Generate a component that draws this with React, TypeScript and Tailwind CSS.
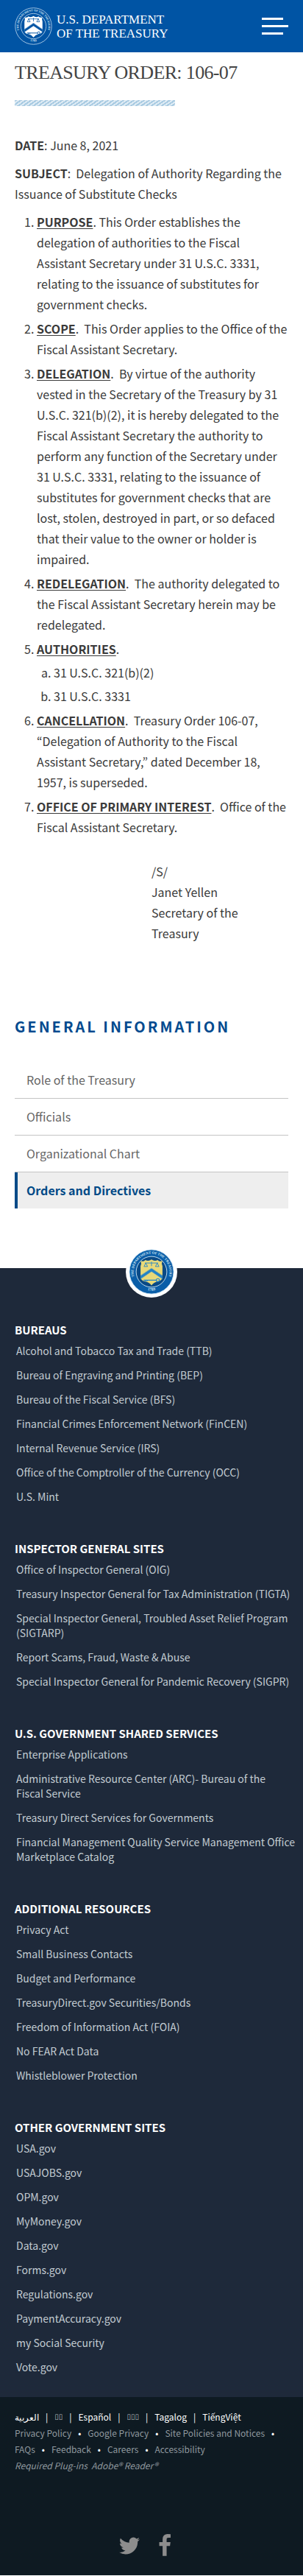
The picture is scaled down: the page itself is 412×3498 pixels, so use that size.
import React from "react";

const navItems = ["Role of the Treasury", "Officials", "Organizational Chart"];

const footerSections: { title: string; links: string[] }[] = [
  {
    title: "BUREAUS",
    links: [
      "Alcohol and Tobacco Tax and Trade (TTB)",
      "Bureau of Engraving and Printing (BEP)",
      "Bureau of the Fiscal Service (BFS)",
      "Financial Crimes Enforcement Network (FinCEN)",
      "Internal Revenue Service (IRS)",
      "Office of the Comptroller of the Currency (OCC)",
      "U.S. Mint",
    ],
  },
  {
    title: "INSPECTOR GENERAL SITES",
    links: [
      "Office of Inspector General (OIG)",
      "Treasury Inspector General for Tax Administration (TIGTA)",
      "Special Inspector General, Troubled Asset Relief Program (SIGTARP)",
      "Report Scams, Fraud, Waste & Abuse",
      "Special Inspector General for Pandemic Recovery (SIGPR)",
    ],
  },
  {
    title: "U.S. GOVERNMENT SHARED SERVICES",
    links: [
      "Enterprise Applications",
      "Administrative Resource Center (ARC)- Bureau of the Fiscal\u00a0Service",
      "Treasury Direct Services for Governments",
      "Financial Management Quality Service Management Office Marketplace Catalog",
    ],
  },
  {
    title: "ADDITIONAL RESOURCES",
    links: [
      "Privacy Act",
      "Small Business Contacts",
      "Budget and Performance",
      "TreasuryDirect.gov Securities/Bonds",
      "Freedom of Information Act (FOIA)",
      "No FEAR Act Data",
      "Whistleblower Protection",
    ],
  },
  {
    title: "OTHER GOVERNMENT SITES",
    links: [
      "USA.gov",
      "USAJOBS.gov",
      "OPM.gov",
      "MyMoney.gov",
      "Data.gov",
      "Forms.gov",
      "Regulations.gov",
      "PaymentAccuracy.gov",
      "my Social Security",
      "Vote.gov",
    ],
  },
];

const languages = [
  { text: "العربية", label: "Arabic", className: "" },
  { text: "▯▯", label: "Chinese", className: "font-['DejaVu_Sans',sans-serif] text-[10px] text-[#b5bbbf]" },
  { text: "Español", label: "Spanish", className: "" },
  { text: "▯▯▯", label: "Korean", className: "font-['DejaVu_Sans',sans-serif] text-[10px] text-[#b5bbbf]" },
  { text: "Tagalog", label: "Tagalog", className: "" },
  { text: "TiếngViệt", label: "Vietnamese", className: "" },
];

const policies = [
  "Privacy Policy",
  "Google Privacy",
  "Site Policies and Notices",
  "FAQs",
  "Feedback",
  "Careers",
  "Accessibility",
];

function Seal({
  id,
  ring,
  line,
  field,
  shield,
  mark,
  className,
}: {
  id: string;
  ring: string;
  line: string;
  field: string;
  shield: string;
  mark: string;
  className: string;
}) {
  return (
    <svg viewBox="0 0 104 104" className={className} aria-hidden="true">
      <defs>
        <path id={id + "-top"} d="M22 80 A41 41 0 1 1 82 80" />
        <path id={id + "-bottom"} d="M34 91 A43 43 0 0 0 70 91" />
      </defs>
      <circle cx="52" cy="52" r="50.5" fill={ring} stroke={line} strokeWidth="1.5" />
      <circle cx="52" cy="52" r="35" fill={field} stroke={line} strokeWidth="1.5" />
      <text fill={line} fontSize="8" fontWeight="700" fontFamily="Liberation Serif, serif">
        <textPath href={"#" + id + "-top"} startOffset="50%" textAnchor="middle">
          THE DEPARTMENT OF THE TREASURY
        </textPath>
      </text>
      <text fill={line} fontSize="9" fontWeight="700" fontFamily="Liberation Serif, serif">
        <textPath href={"#" + id + "-bottom"} startOffset="50%" textAnchor="middle">
          1789
        </textPath>
      </text>
      <path
        d="M27 27 q6 3 11 -2 q7 4 14 -1 q7 5 14 1 q5 5 11 2 q-3 6 0 12 v24 q0 9 -10 11 q-10 2 -15 9 q-5 -7 -15 -9 q-10 -2 -10 -11 v-24 q3 -6 0 -12z"
        fill={shield}
      />
      <path d="M27 60 L52 43 L77 60 V69 L52 52 L27 69z" fill={mark} />
      <path d="M28 60 L52 43.5 L76 60 M28 68 L52 52 L76 68" fill="none" stroke={shield} strokeWidth="1" />
      <path d="M37 32 H67 M52 29 V39 M39 32 l-4 8 h8z M65 32 l-4 8 h8z" fill="none" stroke={mark} strokeWidth="1.5" />
      <path d="M34 71 H63 M63 71 a3.5 3.5 0 1 0 7 0 a3.5 3.5 0 1 0 -7 0 M38 71 v4 M42 71 v3" fill="none" stroke={mark} strokeWidth="2" />
    </svg>
  );
}

function Term({ children }: { children: React.ReactNode }) {
  return <strong className="font-bold underline underline-offset-2">{children}</strong>;
}

export default function App() {
  return (
    <div className="bg-white font-['Noto_Sans_CJK_JP','Noto_Sans',sans-serif] text-[#3a3a3a]">
      <header className="flex h-[71px] items-center justify-between bg-[#0054a4] px-5">
        <a href="#home" className="flex items-center gap-[6px] text-white">
          <Seal id="head" ring="#0054a4" line="#d5e6f5" field="#0054a4" shield="#ffffff" mark="#0054a4" className="size-[51px]" />
          <span className="font-['Liberation_Serif',serif] text-[17px] leading-[19px]">
            U.S. DEPARTMENT
            <br />
            OF THE TREASURY
          </span>
        </a>
        <button type="button" aria-label="Menu" className="flex w-9 flex-col gap-[7px]">
          <span className="h-[3px] w-[29px] bg-white" />
          <span className="h-[3px] w-9 bg-white" />
          <span className="h-[3px] w-[29px] bg-white" />
        </button>
      </header>

      <main className="px-5">
        <h1 className="pt-3 font-['Liberation_Serif',serif] text-[26px] leading-8 tracking-tight text-[#444]">
          TREASURY ORDER: 106-07
        </h1>
        <div className="mt-[21px] h-2 w-[218px] bg-[repeating-linear-gradient(145deg,#a9cbe2_0px,#a9cbe2_2px,#deebf4_2px,#deebf4_4px)]" />

        <div className="mt-[39px] text-base leading-7">
          <p className="mb-[10px]">
            <strong>DATE</strong>: June 8, 2021
          </p>
          <p className="mb-[10px]">
            <strong>SUBJECT</strong>:&nbsp; Delegation of Authority Regarding the Issuance of Substitute Checks
          </p>
          <ol className="list-decimal space-y-[5px] pl-[30px]">
            <li>
              <Term>PURPOSE</Term>. This Order establishes the delegation of authorities to the Fiscal Assistant Secretary under 31
              U.S.C. 3331, relating to the issuance of substitutes for government checks.
            </li>
            <li>
              <Term>SCOPE</Term>.&nbsp; This Order applies to the Office of the Fiscal Assistant Secretary.
            </li>
            <li>
              <Term>DELEGATION</Term>.&nbsp; By virtue of the authority vested in the Secretary of the Treasury by 31 U.S.C.
              321(b)(2), it is hereby delegated to the Fiscal Assistant Secretary the authority to perform any function of the
              Secretary under 31 U.S.C. 3331, relating to the issuance of substitutes for government checks that are lost, stolen,
              destroyed in part, or so defaced that their value to the owner or holder is impaired.
            </li>
            <li>
              <Term>REDELEGATION</Term>.&nbsp; The authority delegated to the Fiscal Assistant Secretary herein may be redelegated.
            </li>
            <li>
              <Term>AUTHORITIES</Term>.
              <ol className="mt-1 list-[lower-alpha] space-y-1 pl-[23px]">
                <li>31 U.S.C. 321(b)(2)</li>
                <li>31 U.S.C. 3331</li>
              </ol>
            </li>
            <li>
              <Term>CANCELLATION</Term>.&nbsp; Treasury Order 106-07, “Delegation of Authority to the Fiscal Assistant Secretary,”
              dated December 18, 1957, is superseded.
            </li>
            <li>
              <Term>OFFICE OF PRIMARY INTEREST</Term>.&nbsp; Office of the Fiscal Assistant Secretary.
            </li>
          </ol>
          <p className="mt-8 ml-auto w-1/2 pr-6">
            /S/
            <br />
            Janet Yellen
            <br />
            Secretary of the Treasury
          </p>
        </div>

        <nav aria-labelledby="section-title" className="mt-[99px] pb-[81px]">
          <h2 id="section-title" className="text-xl leading-7 font-bold tracking-[3px] text-[#004a8f]">
            GENERAL INFORMATION
          </h2>
          <ul className="mt-[34px] text-base text-[#666]">
            {navItems.map((item) => (
              <li key={item} className="border-b border-[#c4c4c4]">
                <a href="#nav" className="block px-4 leading-[49px]">
                  {item}
                </a>
              </li>
            ))}
            <li>
              <a
                href="#orders"
                aria-current="page"
                className="block border-l-4 border-[#004a87] bg-[#eee] px-3 leading-[49px] font-bold text-[#004a87]"
              >
                Orders and Directives
              </a>
            </li>
          </ul>
        </nav>
      </main>

      <footer>
        <div className="relative bg-[#1e293a] pt-[70px] pr-2 pb-[31px] pl-5">
          <div className="absolute top-[-30px] left-1/2 flex size-[70px] -translate-x-1/2 items-center justify-center rounded-full bg-white">
            <Seal id="foot" ring="#0a5ea8" line="#cfe6f5" field="#0a4a86" shield="#e9d978" mark="#2383c8" className="size-[62px]" />
          </div>
          <div className="flex flex-col gap-[47px]">
            {footerSections.map((section) => (
              <section key={section.title}>
                <h3 className="text-[15px] leading-7 font-bold text-white">{section.title}</h3>
                <ul className="mt-1 flex flex-col gap-[13px] pl-[2px] text-sm leading-5 text-[#c3ccd2]">
                  {section.links.map((link) => (
                    <li key={link}>
                      <a href="#site">{link}</a>
                    </li>
                  ))}
                </ul>
              </section>
            ))}
          </div>
        </div>

        <div className="bg-[#0e1a22] px-5 pt-4 pb-6 text-xs leading-[22px] text-[#8f989e]">
          <ul className="flex flex-wrap text-white">
            {languages.map((language, i) => (
              <li key={language.label} className="flex">
                {i > 0 && <span className="px-[9px]">|</span>}
                <a href="#language" aria-label={language.label} className={language.className}>
                  {language.text}
                </a>
              </li>
            ))}
          </ul>
          <ul className="flex flex-wrap">
            {policies.map((policy, i) => (
              <li key={policy} className="flex">
                <a href="#policy">{policy}</a>
                {i < policies.length - 1 && <span className="px-[9px] text-white">•</span>}
              </li>
            ))}
          </ul>
          <p className="italic">
            Required Plug-ins&nbsp; <a href="#reader">Adobe® Reader®</a>
          </p>
          <div className="mt-[82px] flex items-center justify-center gap-4 pr-3 text-[#8d8d8d]">
            <a href="#twitter" aria-label="Twitter">
              <svg viewBox="0 0 1792 1792" className="size-8" fill="currentColor" aria-hidden="true">
                <path d="M1684 408q-67 98-162 167 1 14 1 42 0 130-38 259.5t-115.5 248.5-184.5 210.5-258 146-323 54.5q-271 0-496-145 35 4 78 4 225 0 401-138-105-2-188-64.5t-114-159.5q33 5 61 5 43 0 85-11-112-23-185.5-111.5t-73.5-205.5v-4q68 38 146 41-66-44-105-115t-39-154q0-88 44-163 121 149 294.5 238.5t371.5 99.5q-8-38-8-74 0-134 94.5-228.5t228.5-94.5q140 0 236 102 109-21 205-78-37 115-142 178 93-10 186-50z" />
              </svg>
            </a>
            <a href="#facebook" aria-label="Facebook">
              <svg viewBox="0 0 1792 1792" className="size-8" fill="currentColor" aria-hidden="true">
                <path d="M1343 12v264h-157q-86 0-116 36t-30 108v189h293l-39 296h-254v759h-306v-759h-255v-296h255v-218q0-186 104-288.5t277-102.5q147 0 228 12z" />
              </svg>
            </a>
          </div>
        </div>
      </footer>
    </div>
  );
}
